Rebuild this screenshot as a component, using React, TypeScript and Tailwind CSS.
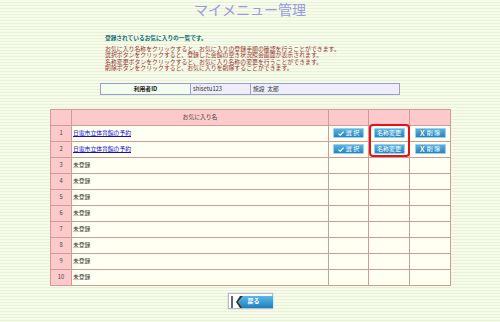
import React from 'react';

const jp = { fontFamily: '"Noto Sans CJK JP", "Noto Sans", sans-serif' };

const rows = [
  { no: 1, name: '日電市立体育館の予約', link: true },
  { no: 2, name: '日電市立体育館の予約', link: true },
  { no: 3, name: '未登録' },
  { no: 4, name: '未登録' },
  { no: 5, name: '未登録' },
  { no: 6, name: '未登録' },
  { no: 7, name: '未登録' },
  { no: 8, name: '未登録' },
  { no: 9, name: '未登録' },
  { no: 10, name: '未登録' },
];

// small blue button used in the table
const BlueButton: React.FC<{ children: React.ReactNode }> = ({ children }) => (
  <div className="mx-auto flex h-[10px] w-[31px] items-center justify-center gap-[2px] rounded-[1px] border border-[#9fd0ea] bg-gradient-to-b from-[#5ab3e2] to-[#1f86c0] text-[6px] leading-none text-white">
    {children}
  </div>
);

const BackButton: React.FC = () => (
  <div className="relative flex h-[16px] w-[45px] items-center border border-[#b8bcc8] bg-white shadow-[0_0_1px_#999]">
    <svg width="45" height="16" viewBox="0 0 45 16" className="absolute left-0 top-0">
      <rect x="2" y="2" width="2" height="12" fill="#666" />
      <polygon points="14,2 44,2 44,14 14,14 9,8" fill="url(#bk)" />
      <polygon points="14,2 11,2 7,8 11,14 14,14 9,8" fill="#333" />
      <defs>
        <linearGradient id="bk" x1="0" y1="0" x2="0" y2="1">
          <stop offset="0" stopColor="#5ab8e8" />
          <stop offset="1" stopColor="#1c7fc0" />
        </linearGradient>
      </defs>
    </svg>
    <span className="relative ml-[19px] text-[6px] font-bold leading-none text-white">戻る</span>
  </div>
);

export default function App() {
  return (
    <div
      style={jp}
      className="h-[322px] w-[500px] overflow-hidden bg-[repeating-linear-gradient(to_bottom,#f6fbec_0px,#f6fbec_2px,#e7f2d6_2px,#e7f2d6_3px)]"
    >
      <h1 className="pt-[1px] text-center text-[14px] leading-[17px] text-[#9a9ae0]">マイメニュー管理</h1>

      <div className="ml-[105px] mt-[16px]">
        <p className="text-[5.7px] font-bold leading-[7px] text-[#0a6e6e]">登録されているお気に入りの一覧です。</p>
        <div className="mt-[5px] text-[5.9px] leading-[6.4px] text-[#993333]">
          <p>お気に入り名称をクリックすると、お気に入りの登録手順の確認を行うことができます。</p>
          <p>選択ボタンをクリックすると、登録した会館の空き状況照会画面が表示されます。</p>
          <p>名称変更ボタンをクリックすると、お気に入り名称の変更を行うことができます。</p>
          <p>削除ボタンをクリックすると、お気に入りを削除することができます。</p>
        </div>
      </div>

      {/* user info */}
      <table className="mx-auto mt-[11px] w-[300px] border-collapse border border-[#9c9cd0] text-[5.8px] leading-none">
        <tbody>
          <tr className="h-[11px]">
            <td className="w-[90px] border border-[#9c9cd0] bg-[#f2fdf0] text-center font-bold text-[#222]">利用者ID</td>
            <td className="w-[60px] border border-[#9c9cd0] bg-[#eeeefb] pl-[2px] text-[#333]">shisetu123</td>
            <td className="border border-[#9c9cd0] bg-[#eeeefb] pl-[2px] text-[#333]">施設&nbsp;&nbsp;太郎</td>
          </tr>
        </tbody>
      </table>

      {/* favourites list */}
      <div className="relative mx-auto mt-[14px] w-[400px]">
        <table className="w-[400px] table-fixed border-collapse border border-[#cf9a9a] text-[5.8px] leading-none">
          <colgroup>
            <col className="w-[21px]" />
            <col className="w-[257px]" />
            <col className="w-[40px]" />
            <col className="w-[41px]" />
            <col className="w-[41px]" />
          </colgroup>
          <thead>
            <tr className="h-[16px] bg-[#fccaca]">
              <th className="border border-[#cf9a9a]" />
              <th className="border border-[#cf9a9a] font-normal text-[#444]">お気に入り名</th>
              <th className="border border-[#cf9a9a]" />
              <th className="border border-[#cf9a9a]" />
              <th className="border border-[#cf9a9a]" />
            </tr>
          </thead>
          <tbody>
            {rows.map(r => (
              <tr key={r.no} className="h-[16px]">
                <td className="border border-[#cf9a9a] bg-[#fccaca] text-center text-[#444]">{r.no}</td>
                <td className="border border-[#cf9a9a] bg-[#fffff2] pl-[1px]">
                  {r.link ? (
                    <span className="text-[#1010d0] underline">{r.name}</span>
                  ) : (
                    <span className="text-[#333]">{r.name}</span>
                  )}
                </td>
                <td className="border border-[#cf9a9a] bg-[#fffff2]">
                  {r.link && (
                    <BlueButton>
                      <svg width="6" height="5" viewBox="0 0 6 5">
                        <path d="M0.5 2.6 L2.2 4.3 L5.5 0.6" stroke="#fff" strokeWidth="1.2" fill="none" />
                      </svg>
                      <span>選 択</span>
                    </BlueButton>
                  )}
                </td>
                <td className="border border-[#cf9a9a] bg-[#fffff2]">
                  {r.link && <BlueButton>名称変更</BlueButton>}
                </td>
                <td className="border border-[#cf9a9a] bg-[#fffff2]">
                  {r.link && (
                    <BlueButton>
                      <span className="text-[8px] font-bold text-white [text-shadow:0_0_1px_#124]">X</span>
                      <span>削 除</span>
                    </BlueButton>
                  )}
                </td>
              </tr>
            ))}
          </tbody>
        </table>
        {/* highlight annotation */}
        <div className="absolute left-[319px] top-[15px] h-[33px] w-[41px] rounded-[4px] border-2 border-[#e8101a]" />
      </div>

      <div className="mt-[7px] flex justify-center">
        <BackButton />
      </div>
    </div>
  );
}
